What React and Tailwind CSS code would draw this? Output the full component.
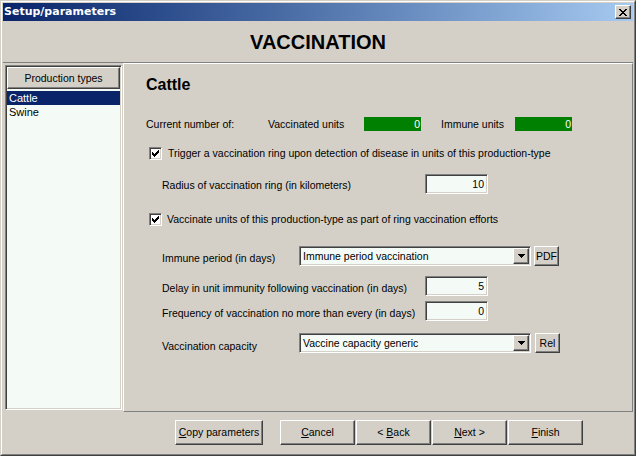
import React from "react";

const sunken =
  "border border-t-[#808080] border-l-[#808080] border-b-white border-r-white shadow-[inset_1px_1px_0_#404040,inset_-1px_-1px_0_#d4d0c8]";
const raised =
  "border border-t-white border-l-white border-b-[#404040] border-r-[#404040] shadow-[inset_-1px_-1px_0_#808080]";

function Check() {
  return (
    <div className={`w-[13px] h-[13px] bg-white flex items-center justify-center ${sunken}`}>
      <svg width="9" height="9" viewBox="0 0 9 9" shapeRendering="crispEdges">
        <path d="M1 3h1v1h1v1h1v-1h1v-1h1v-1h1v-1h1v3h-1v1h-1v1h-1v1h-1v1h-1v-1h-1v-1h-1z" fill="#000" />
      </svg>
    </div>
  );
}

function Field({ value }) {
  return (
    <div className={`w-[63px] h-[20px] bg-[#f4fbf6] flex items-center justify-end pr-[3px] text-[10.5px] leading-[13px] ${sunken}`}>
      {value}
    </div>
  );
}

function Select({ value }) {
  return (
    <div className={`w-[232px] h-[20px] bg-[#f4fbf6] flex items-stretch p-[1px] ${sunken}`}>
      <div className="flex-1 flex items-center pl-[2px] text-[10.5px] leading-[13px]">{value}</div>
      <div className={`w-[16px] bg-[#d4d0c8] flex items-center justify-center ${raised}`}>
        <svg width="7" height="4" viewBox="0 0 7 4" shapeRendering="crispEdges">
          <path d="M0 0h7v1h-1v1h-1v1h-1v1h-1v-1h-1v-1h-1v-1h-1z" fill="#000" />
        </svg>
      </div>
    </div>
  );
}

function SmallBtn({ label, className = "" }) {
  return (
    <div className={`w-[25px] h-[20px] bg-[#d4d0c8] flex items-center justify-center text-[10.5px] leading-[13px] ${raised} ${className}`}>
      {label}
    </div>
  );
}

function Btn({ w, children, className = "" }) {
  return (
    <div className={`${w} h-[25px] bg-[#d4d0c8] flex items-center justify-center text-[10.5px] leading-[13px] ${raised} ${className}`}>
      {children}
    </div>
  );
}

function U({ children }) {
  return <span className="underline underline-offset-[1px]">{children}</span>;
}

function Green() {
  return (
    <div className="w-[57px] h-[14px] bg-[#008000] text-white flex items-center justify-end pr-[1px] text-[10.5px] leading-[13px]">
      0
    </div>
  );
}

export default function App() {
  return (
    <div className="w-[636px] h-[456px] bg-[#d4d0c8] border border-t-[#d4d0c8] border-l-[#d4d0c8] border-r-[#404040] border-b-[#404040] font-['Liberation_Sans',Arial,sans-serif] text-black overflow-hidden">
      <div className="h-full flex flex-col border border-t-white border-l-white border-r-[#808080] border-b-[#808080] p-px">
        {/* Title bar */}
        <div className="h-[18px] shrink-0 flex items-center justify-between bg-gradient-to-r from-[#0a246a] to-[#a6caf0] pl-[1px] pr-[2px]">
          <span className="text-white font-bold text-[11px] leading-[14px] font-['DejaVu_Sans',sans-serif]">
            Setup/parameters
          </span>
          <div className={`w-[16px] h-[14px] bg-[#d4d0c8] flex items-center justify-center ${raised}`}>
            <svg width="8" height="7" viewBox="0 0 8 7" shapeRendering="crispEdges">
              <path d="M0 0h2v1h1v1h2v-1h1v-1h2v1h-1v1h-1v1h-1v1h1v1h1v1h1v1h-2v-1h-1v-1h-2v1h-1v1h-2v-1h1v-1h1v-1h1v-1h-1v-1h-1v-1h-1z" fill="#000" />
            </svg>
          </div>
        </div>

        {/* Header */}
        <div className="h-[42px] shrink-0 flex items-center justify-center border-b border-[#808080]">
          <span className="font-bold text-[20px] leading-[24px]">VACCINATION</span>
        </div>

        {/* Main */}
        <div className="h-[349px] shrink-0 flex">
          {/* Left panel */}
          <div className="w-[120px] shrink-0 pl-[2px] pt-[2px] pr-[1px] pb-[2px] flex">
            <div className={`flex-1 flex flex-col ${sunken}`}>
              <div className="m-px flex-1 flex flex-col">
                <div className={`h-[22px] shrink-0 bg-[#d4d0c8] flex items-center justify-center text-[10.5px] leading-[13px] ${raised}`}>
                  Production types
                </div>
                <div className="flex-1 bg-[#f4fbf6] pt-[2px] text-[11px] leading-[14px]">
                  <div className="h-[14px] bg-[#0a246a] text-white pl-[2px] flex items-center">Cattle</div>
                  <div className="h-[14px] pl-[2px] flex items-center">Swine</div>
                </div>
              </div>
            </div>
          </div>

          {/* Right panel */}
          <div className="flex-1 border border-t-white border-l-white border-r-[#808080] border-b-[#808080] pl-[22px] text-[10.5px] leading-[13px] flex flex-col">
            <div className="mt-[11px] h-[20px] flex items-center font-bold text-[16px] leading-[20px]">Cattle</div>

            <div className="mt-[22px] h-[14px] flex items-center">
              <span className="w-[122px]">Current number of:</span>
              <span className="w-[96px]">Vaccinated units</span>
              <Green />
              <span className="ml-[20px] w-[74px]">Immune units</span>
              <Green />
            </div>

            <div className="mt-[16px] h-[13px] flex items-center ml-[3px]">
              <Check />
              <span className="ml-[6px]">
                Trigger a vaccination ring upon detection of disease in units of this production-type
              </span>
            </div>

            <div className="mt-[14px] h-[20px] flex items-center ml-[16px]">
              <span className="w-[263px] pt-[3px]">Radius of vaccination ring (in kilometers)</span>
              <Field value="10" />
            </div>

            <div className="mt-[19px] h-[13px] flex items-center ml-[3px]">
              <Check />
              <span className="ml-[5px]">
                Vaccinate units of this production-type as part of ring vaccination efforts
              </span>
            </div>

            <div className="mt-[20px] h-[20px] flex items-center ml-[16px]">
              <span className="w-[137px] pt-[4px]">Immune period (in days)</span>
              <Select value="Immune period vaccination" />
              <SmallBtn label="PDF" className="ml-[3px]" />
            </div>

            <div className="mt-[10px] h-[20px] flex items-center ml-[16px]">
              <span className="w-[263px] pt-[4px]">Delay in unit immunity following vaccination (in days)</span>
              <Field value="5" />
            </div>

            <div className="mt-[5px] h-[20px] flex items-center ml-[16px]">
              <span className="w-[263px] pt-[4px]">Frequency of vaccination no more than every (in days)</span>
              <Field value="0" />
            </div>

            <div className="mt-[12px] h-[20px] flex items-center ml-[16px]">
              <span className="w-[137px] pt-[6px]">Vaccination capacity</span>
              <Select value="Vaccine capacity generic" />
              <SmallBtn label="Rel" className="ml-[4px]" />
            </div>
          </div>
        </div>

        {/* Buttons */}
        <div className="flex-1 flex items-start pl-[172px] pt-[8px]">
          <Btn w="w-[88px]">
            <span><U>C</U>opy parameters</span>
          </Btn>
          <Btn w="w-[75px]" className="ml-[17px]">
            <span><U>C</U>ancel</span>
          </Btn>
          <Btn w="w-[75px]" className="ml-[1px]">
            <span>&lt; <U>B</U>ack</span>
          </Btn>
          <Btn w="w-[75px]" className="ml-[1px]">
            <span><U>N</U>ext &gt;</span>
          </Btn>
          <Btn w="w-[75px]" className="ml-[1px]">
            <span><U>F</U>inish</span>
          </Btn>
        </div>
      </div>
    </div>
  );
}
